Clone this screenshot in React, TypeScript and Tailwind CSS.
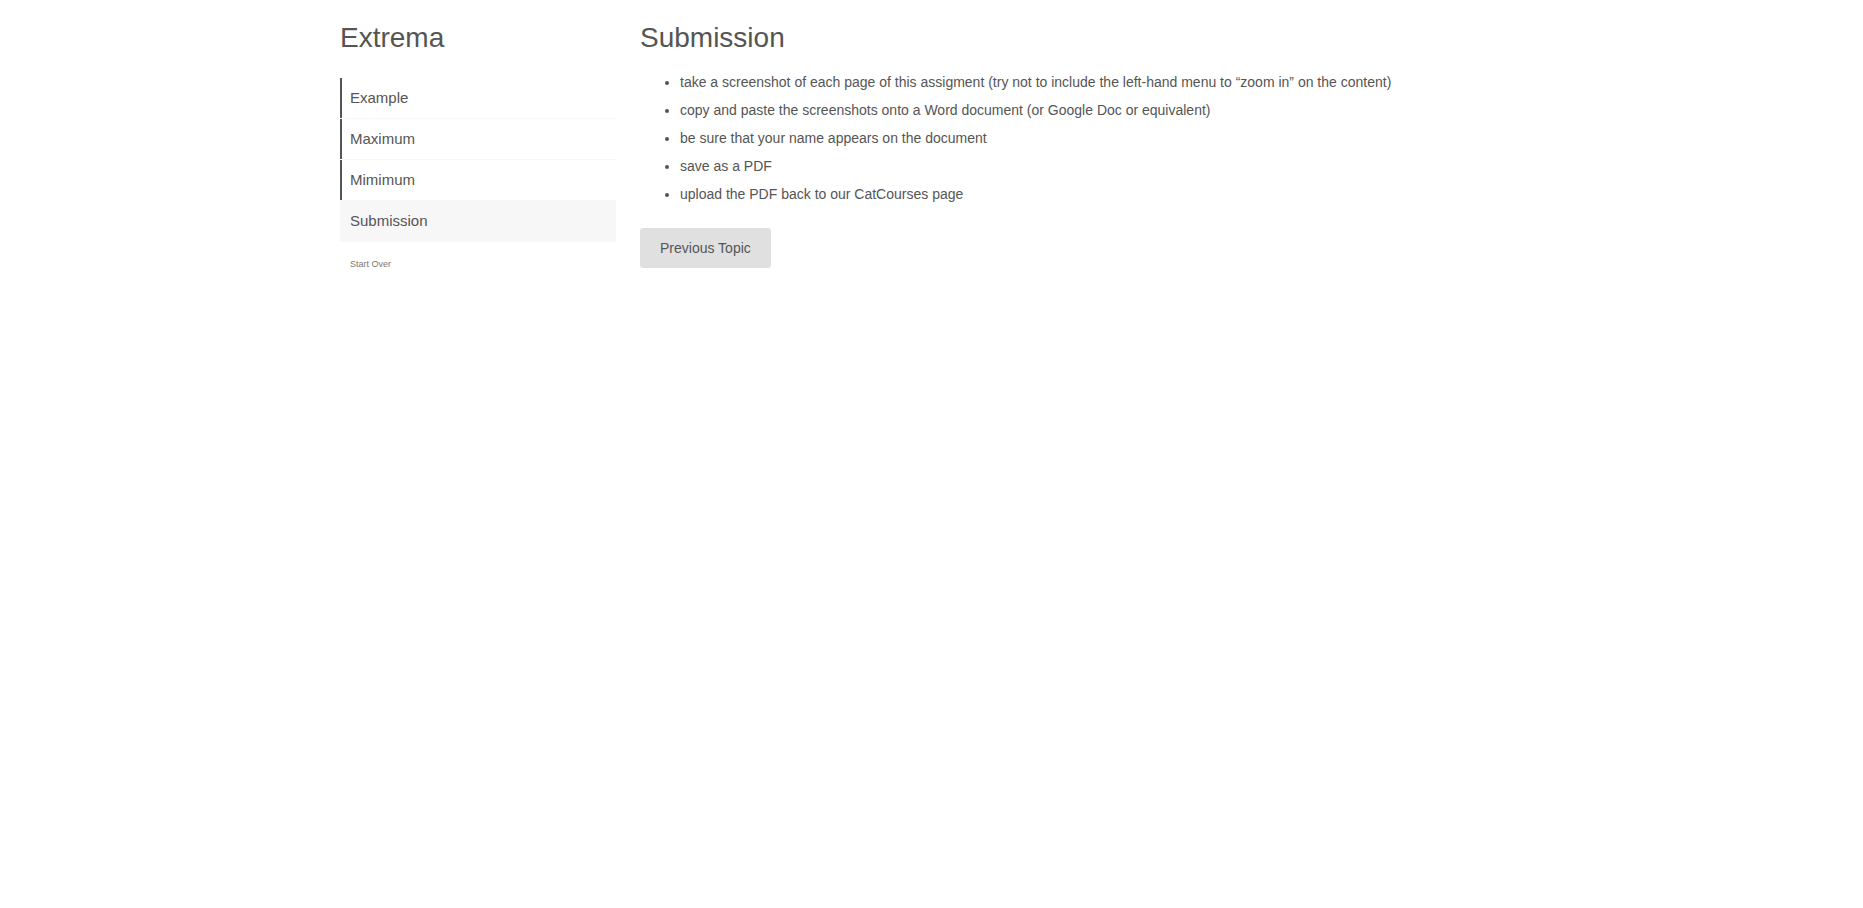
import React from "react";

const topics = ["Example", "Maximum", "Mimimum", "Submission"];

const steps = [
  "take a screenshot of each page of this assigment (try not to include the left-hand menu to “zoom in” on the content)",
  "copy and paste the screenshots onto a Word document (or Google Doc or equivalent)",
  "be sure that your name appears on the document",
  "save as a PDF",
  "upload the PDF back to our CatCourses page",
];

function TopicLink({ title, current }: { title: string; current: boolean }) {
  return (
    <li className="border-b border-[#f7f7f7]">
      <a
        href="#"
        aria-current={current ? "page" : undefined}
        className={
          current
            ? "block h-10 bg-[#f7f7f7] pl-2.5 text-[15px] leading-10"
            : "block h-10 border-l-2 border-[#555555] pl-2 text-[15px] leading-10"
        }
      >
        {title}
      </a>
    </li>
  );
}

export default function App() {
  return (
    <div className="mx-auto flex max-w-[1183px] gap-6 pt-5 font-['Liberation_Sans',Arial,sans-serif] text-[#555555]">
      <aside className="w-[276px] shrink-0">
        <h2 className="text-[28px] leading-9">Extrema</h2>
        <nav aria-label="Topics" className="mt-[22px]">
          <ul>
            {topics.map((title) => (
              <TopicLink key={title} title={title} current={title === "Submission"} />
            ))}
          </ul>
        </nav>
        <button type="button" className="mt-4 block pl-2.5 text-[9px] leading-3 text-[#777777]">
          Start Over
        </button>
      </aside>
      <main className="min-w-0 flex-1">
        <h2 className="text-[28px] leading-9">Submission</h2>
        <ul className="mt-3 list-disc pl-10 text-sm leading-7">
          {steps.map((step) => (
            <li key={step}>{step}</li>
          ))}
        </ul>
        <button type="button" className="mt-5 h-10 rounded-[3px] bg-[#e0e0e0] px-5 text-sm">
          Previous Topic
        </button>
      </main>
    </div>
  );
}
